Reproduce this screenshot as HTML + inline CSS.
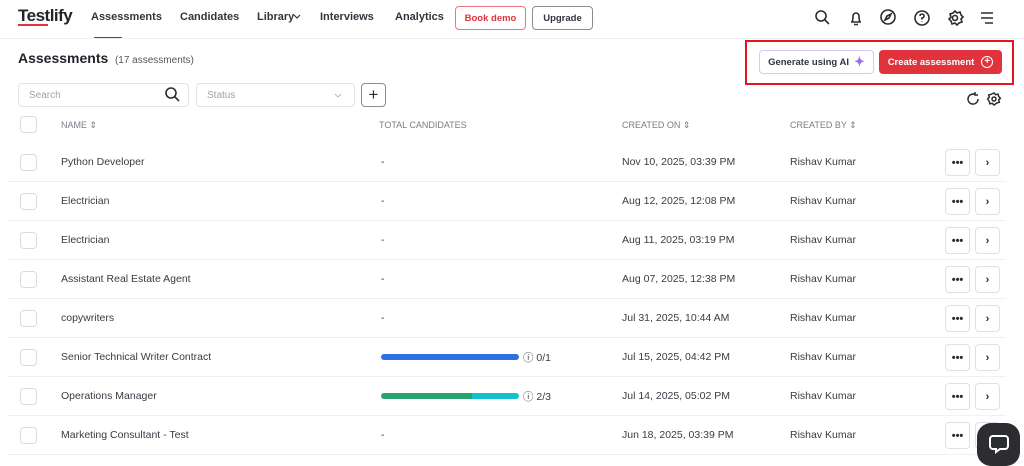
<!DOCTYPE html>
<html><head><meta charset="utf-8"><style>
*{box-sizing:border-box;margin:0;padding:0}
html,body{width:1024px;height:466px;overflow:hidden}
body{background:#fff;font-family:"Liberation Sans",sans-serif;color:#2b2b33;position:relative}
.a{position:absolute}
.nav{font-size:11px;font-weight:bold;color:#33343d;top:11px}
.btn{position:absolute;border-radius:4px;font-size:9.5px;font-weight:bold;display:flex;align-items:center;justify-content:center}
.row{position:absolute;left:8px;width:998px;height:39px;border-bottom:1px solid #eef0f3}
.cb{position:absolute;left:12px;top:11px;width:17px;height:17px;border:1px solid #d8dbe0;border-radius:4px}
.t{position:absolute;top:13px;font-size:10.5px;color:#3a3b44}
.b{position:absolute;top:6px;width:25px;height:27px;border:1px solid #dde0e5;border-radius:4px;display:flex;align-items:center;justify-content:center;font-size:11px;font-weight:bold}
.hd{position:absolute;top:120px;font-size:9px;color:#7a7d87}
svg{position:absolute}
</style></head><body>
<div class="a" style="left:18px;top:6px;font-size:17px;font-weight:bold;color:#22232b;letter-spacing:-0.5px">Testlify</div>
<div class="a" style="left:18px;top:24px;width:30px;height:2px;background:#e0333c"></div>
<div class="a nav" style="left:91px">Assessments</div>
<div class="a" style="left:94px;top:37px;width:28px;height:2px;background:#4a4c58"></div>
<div class="a nav" style="left:180px">Candidates</div>
<div class="a nav" style="left:257px">Library</div>
<svg style="left:293px;top:14px" width="8" height="6" fill="none" stroke="#33343d" stroke-width="1.2"><path d="M1 1l3 3 3-3"/></svg>
<div class="a nav" style="left:320px">Interviews</div>
<div class="a nav" style="left:395px">Analytics</div>
<div class="btn" style="left:455px;top:6px;width:71px;height:24px;border:1px solid #e9767c;color:#e0333c">Book demo</div>
<div class="btn" style="left:532px;top:6px;width:61px;height:24px;border:1px solid #8a8c96;color:#33343d">Upgrade</div>
<svg style="left:814px;top:9px" width="186" height="18" fill="none" stroke="#2b2c33" stroke-width="1.6">
<circle cx="7" cy="7" r="5"/><path d="M11 11l4 4"/>
<path d="M37 13h10M38 13c1-2 1-3 1-6a3 3 0 0 1 6 0c0 3 0 4 1 6M40 15.5h4"/>
<circle cx="74" cy="8" r="7"/><path d="M77 5l-2 4-4 2 2-4z"/>
<circle cx="108" cy="9" r="7"/><path d="M106 7a2 2 0 1 1 2 2v1.5M108 12.5v.5"/>
<circle cx="141" cy="9" r="2.5"/><path d="M141 2l2 2 3-1 1 3 2 2-2 2 1 3-3 1-2 2-2-2-3 1-1-3-2-2 2-2-1-3 3-1z"/>
<path d="M167 4h12M167 9h12M171 14h8"/>
</svg>
<div class="a" style="left:0;top:38px;width:1024px;height:1px;background:#eef0f3"></div>
<div class="a" style="left:18px;top:50px;font-size:14px;font-weight:bold;color:#22232b">Assessments <span style="font-size:10px;font-weight:normal;color:#55575f">&nbsp;(17 assessments)</span></div>
<div class="a" style="left:745px;top:40px;width:269px;height:45px;border:2px solid #e0171f"></div>
<div class="btn" style="left:759px;top:50px;width:115px;height:24px;border:1px solid #d9c8f5;color:#33343d">Generate using AI <span style="color:#9b6ef0;font-size:13px;margin-left:5px">✦</span></div>
<div class="btn" style="left:879px;top:50px;width:123px;height:24px;background:#e0333c;color:#fff">Create assessment <span style="display:inline-block;width:12px;height:12px;border:1.3px solid #fff;border-radius:50%;margin-left:7px;font-size:10px;line-height:9px;text-align:center">+</span></div>
<div class="a" style="left:18px;top:83px;width:171px;height:24px;border:1px solid #e2e4e8;border-radius:4px;font-size:10px;color:#a0a3ab;padding:6px 10px">Search</div>
<svg style="left:164px;top:86px" width="18" height="18" fill="none" stroke="#2b2c33" stroke-width="1.6"><circle cx="7" cy="7" r="5"/><path d="M11 11l4 4"/></svg>
<div class="a" style="left:196px;top:83px;width:159px;height:24px;border:1px solid #e2e4e8;border-radius:4px;font-size:10px;color:#a0a3ab;padding:6px 10px">Status</div>
<svg style="left:334px;top:93px" width="8" height="6" fill="none" stroke="#bbb" stroke-width="1"><path d="M1 1l3 3 3-3"/></svg>
<div class="a" style="left:361px;top:83px;width:25px;height:24px;border:1px solid #8a8c96;border-radius:4px;text-align:center;font-size:17px;line-height:21px">+</div>
<svg style="left:965px;top:91px" width="40" height="18" fill="none" stroke="#2b2c33" stroke-width="1.5"><path d="M13 8a5 5 0 1 1-3-4.5M10 1v3h3"/><circle cx="29" cy="8" r="2"/><path d="M29 2l1.7 1.7 2.4-.6.6 2.4 1.7 1.7-1.7 1.7.6 2.4-2.4.6L29 14l-1.7-1.7-2.4.6-.6-2.4L22.6 8l1.7-1.7-.6-2.4 2.4-.6z"/></svg>
<div class="a" style="left:20px;top:116px;width:17px;height:17px;border:1px solid #d8dbe0;border-radius:4px"></div>
<div class="hd" style="left:61px">NAME ⇕</div>
<div class="hd" style="left:379px">TOTAL CANDIDATES</div>
<div class="hd" style="left:622px">CREATED ON ⇕</div>
<div class="hd" style="left:790px">CREATED BY ⇕</div>

<div class="row" style="top:143px"><div class="cb"></div><div class="t" style="left:53px">Python Developer</div><div class="t" style="left:373px">-</div><div class="t" style="left:614px">Nov 10, 2025, 03:39 PM</div><div class="t" style="left:782px">Rishav Kumar</div><div class="b" style="left:937px">•••</div><div class="b" style="left:967px">›</div></div>
<div class="row" style="top:182px"><div class="cb"></div><div class="t" style="left:53px">Electrician</div><div class="t" style="left:373px">-</div><div class="t" style="left:614px">Aug 12, 2025, 12:08 PM</div><div class="t" style="left:782px">Rishav Kumar</div><div class="b" style="left:937px">•••</div><div class="b" style="left:967px">›</div></div>
<div class="row" style="top:221px"><div class="cb"></div><div class="t" style="left:53px">Electrician</div><div class="t" style="left:373px">-</div><div class="t" style="left:614px">Aug 11, 2025, 03:19 PM</div><div class="t" style="left:782px">Rishav Kumar</div><div class="b" style="left:937px">•••</div><div class="b" style="left:967px">›</div></div>
<div class="row" style="top:260px"><div class="cb"></div><div class="t" style="left:53px">Assistant Real Estate Agent</div><div class="t" style="left:373px">-</div><div class="t" style="left:614px">Aug 07, 2025, 12:38 PM</div><div class="t" style="left:782px">Rishav Kumar</div><div class="b" style="left:937px">•••</div><div class="b" style="left:967px">›</div></div>
<div class="row" style="top:299px"><div class="cb"></div><div class="t" style="left:53px">copywriters</div><div class="t" style="left:373px">-</div><div class="t" style="left:614px">Jul 31, 2025, 10:44 AM</div><div class="t" style="left:782px">Rishav Kumar</div><div class="b" style="left:937px">•••</div><div class="b" style="left:967px">›</div></div>
<div class="row" style="top:338px"><div class="cb"></div><div class="t" style="left:53px">Senior Technical Writer Contract</div><div class="a" style="left:373px;top:16px;width:138px;height:6px;border-radius:3px;background:#2f6fe4"></div><div class="t" style="left:515px;top:12px">ⓘ 0/1</div><div class="t" style="left:614px">Jul 15, 2025, 04:42 PM</div><div class="t" style="left:782px">Rishav Kumar</div><div class="b" style="left:937px">•••</div><div class="b" style="left:967px">›</div></div>
<div class="row" style="top:377px"><div class="cb"></div><div class="t" style="left:53px">Operations Manager</div><div class="a" style="left:373px;top:16px;width:138px;height:6px;border-radius:3px;background:linear-gradient(90deg,#27a36d 66%,#12c2cf 66%)"></div><div class="t" style="left:515px;top:12px">ⓘ 2/3</div><div class="t" style="left:614px">Jul 14, 2025, 05:02 PM</div><div class="t" style="left:782px">Rishav Kumar</div><div class="b" style="left:937px">•••</div><div class="b" style="left:967px">›</div></div>
<div class="row" style="top:416px;height:50px;border:none"><div class="cb"></div><div class="t" style="left:53px">Marketing Consultant - Test</div><div class="t" style="left:373px">-</div><div class="t" style="left:614px">Jun 18, 2025, 03:39 PM</div><div class="t" style="left:782px">Rishav Kumar</div><div class="b" style="left:937px">•••</div><div class="b" style="left:967px">›</div><div class="a" style="left:0;top:38px;width:998px;height:1px;background:#eef0f3"></div></div>
<div class="a" style="left:977px;top:423px;width:43px;height:43px;border-radius:14px;background:#2c2d31"></div>
<svg style="left:988px;top:433px" width="22" height="22" fill="none" stroke="#fff" stroke-width="2"><path d="M5 3h12a3 3 0 0 1 3 3v7a3 3 0 0 1-3 3H12l-4 3v-3H5a3 3 0 0 1-3-3V6a3 3 0 0 1 3-3z"/></svg>
</body></html>
